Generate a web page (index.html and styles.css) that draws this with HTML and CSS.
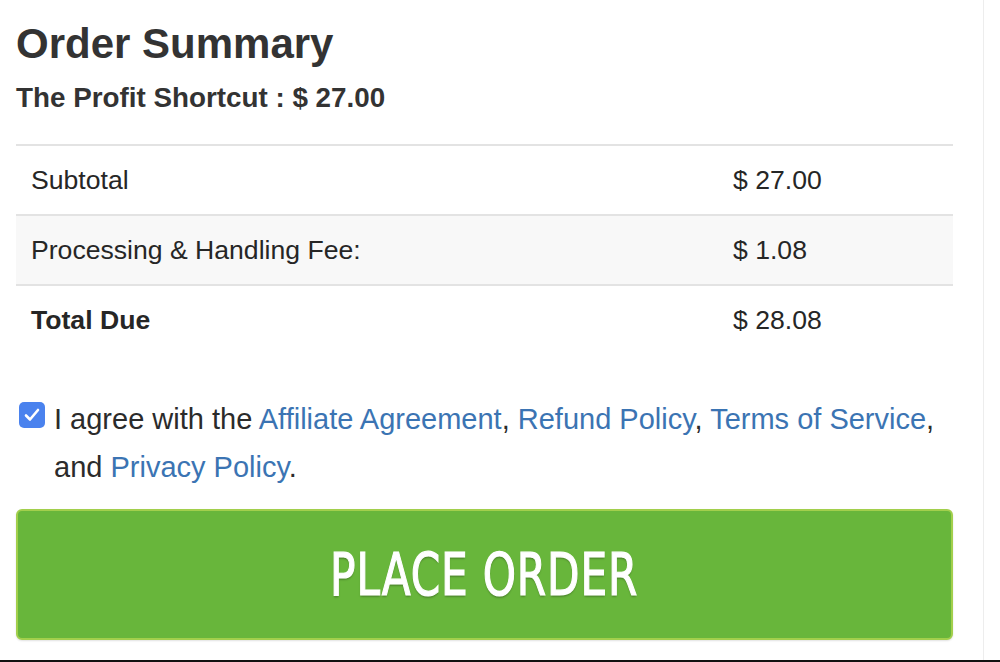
FILE: index.html
```html
<!DOCTYPE html>
<html lang="en">
<head>
<meta charset="utf-8">
<title>Order Summary</title>
<link rel="stylesheet" href="styles.css">
</head>
<body>
<div class="frame">
  <div class="panel">
    <h1 class="title">Order Summary</h1>
    <p class="product">The Profit Shortcut : $ 27.00</p>
    <div class="totals">
      <div class="row">
        <div class="label">Subtotal</div>
        <div class="amount">$ 27.00</div>
      </div>
      <div class="row alt">
        <div class="label">Processing &amp; Handling Fee:</div>
        <div class="amount">$ 1.08</div>
      </div>
      <div class="row">
        <div class="label strong">Total Due</div>
        <div class="amount">$ 28.08</div>
      </div>
    </div>
    <div class="agree">
      <span class="check">
        <svg viewBox="0 0 26 26" width="26" height="26" aria-hidden="true">
          <path d="M7 13.5 L11 17.5 L19 8" fill="none" stroke="#fff" stroke-width="2.6" stroke-linecap="round" stroke-linejoin="round"/>
        </svg>
      </span>
      <p class="agree-text"><span>I agree with the</span> <a href="#">Affiliate Agreement</a>, <a href="#">Refund Policy</a>, <a href="#">Terms of Service</a>, <span>and</span> <a href="#">Privacy Policy</a>.</p>
    </div>
    <button class="order" type="button"><span class="order-label">PLACE ORDER</span></button>
  </div>
</div>
</body>
</html>
```

FILE: styles.css
```css
html, body {
  margin: 0;
  padding: 0;
  background: #fff;
}

body {
  font-family: "Liberation Sans", Arial, sans-serif;
  color: #333;
}

.frame {
  width: 1000px;
  height: 660px;
  border-bottom: 2px solid #111;
  overflow: hidden;
}

.panel {
  width: 984px;
  height: 660px;
  border-right: 1px solid #ededed;
  box-sizing: border-box;
  padding: 20px 0 0 16px;
}

.title {
  margin: 0;
  font-size: 42px;
  line-height: 48px;
  font-weight: bold;
  color: #333;
}

.product {
  margin: 14px 0 0;
  font-size: 27.8px;
  line-height: 32px;
  font-weight: bold;
  color: #333;
}

.totals {
  margin-top: 30px;
  width: 937px;
}

.row {
  display: grid;
  grid-template-columns: 702px 1fr;
  padding: 0 15px;
  height: 70px;
  align-items: center;
  border-top: 2px solid #e3e3e3;
  font-size: 26.6px;
  color: #262626;
  box-sizing: border-box;
}

.row.alt {
  background: #f8f8f8;
}

.strong {
  font-weight: bold;
}

.agree {
  margin-top: 41px;
  display: flex;
  align-items: flex-start;
  gap: 9px;
  padding-left: 3px;
  width: 934px;
}

.check {
  flex: none;
  width: 26px;
  height: 26px;
  margin-top: 7px;
  background: #4a82ee;
  border-radius: 5px;
  display: flex;
}

.agree-text {
  margin: 0;
  font-size: 29px;
  line-height: 48px;
  color: #2b2b2b;
}

.agree-text a {
  color: #3b74b3;
  text-decoration: none;
}

.order {
  margin-top: 18px;
  width: 937px;
  height: 131px;
  display: flex;
  align-items: center;
  justify-content: center;
  background: #68b63b;
  border: 2px solid #a2cf4c;
  border-radius: 6px;
  box-shadow: 0 1px 2px rgba(0, 0, 0, 0.12);
  padding: 0;
  cursor: pointer;
}

.order-label {
  display: inline-block;
  font-family: "DejaVu Sans Condensed", "DejaVu Sans", sans-serif;
  font-stretch: condensed;
  font-size: 58px;
  line-height: 1;
  color: #fff;
  -webkit-text-stroke: 1.2px #fff;
  letter-spacing: 1px;
  text-shadow: 0 2px 2px rgba(0, 0, 0, 0.25);
  transform: scaleX(0.81);
}
```
